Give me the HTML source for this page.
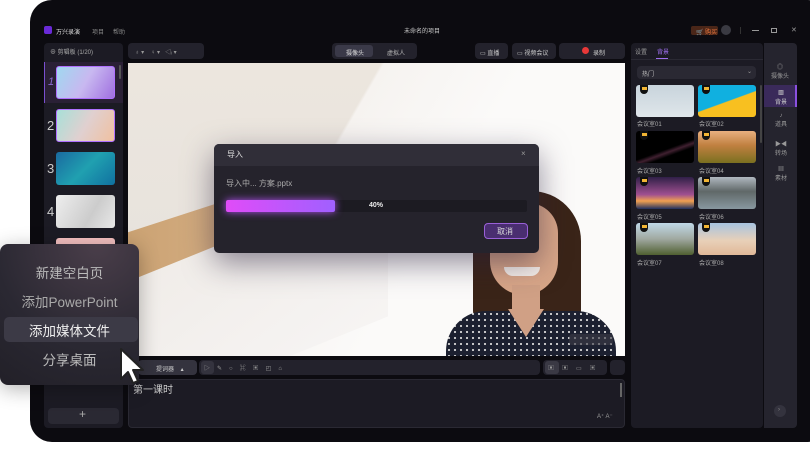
<!DOCTYPE html>
<html><head><meta charset="utf-8"><style>
*{margin:0;padding:0;box-sizing:border-box}
body{width:810px;height:456px;background:#fff;position:relative;overflow:hidden;font-family:"Liberation Sans","Noto Sans CJK SC",sans-serif;color:#bbb}
.a{position:absolute}
.win{left:30px;top:0;width:800px;height:442px;background:#0c0b10;border-radius:22px}
.panel{background:#1c1b24;border-radius:4px}
.t{font-size:6px;color:#aaa;white-space:nowrap}
.btn{background:#23222c;border-radius:4px}
.th{border-radius:3px}
.crown{width:8px;height:9px;background:#111;border-radius:0 0 4px 4px}
.crown:after{content:"";position:absolute;left:1.5px;top:2px;width:5px;height:3px;background:#f2b534}
</style></head><body>
<div class="a win"></div>
<!-- title bar -->
<div class="a" style="left:44px;top:26px;width:8px;height:8px;border-radius:2px;background:#6a2ad8"></div>
<div class="a t" style="left:56px;top:27px;color:#ddd">万兴录演</div>
<div class="a t" style="left:92px;top:27px;color:#888">项目</div>
<div class="a t" style="left:113px;top:27px;color:#888">帮助</div>
<div class="a t" style="left:404px;top:26px;color:#ccc">未命名的项目</div>
<div class="a" style="left:691px;top:26px;width:27px;height:9px;background:#4a2618;border-radius:2px"></div>
<div class="a t" style="left:696px;top:27px;color:#f07a40">🛒 购买</div>
<div class="a" style="left:721px;top:25px;width:10px;height:10px;border-radius:50%;background:#3a3a42"></div>
<div class="a" style="left:740px;top:27px;width:1px;height:7px;background:#333"></div>
<div class="a" style="left:752px;top:30px;width:7px;height:1px;background:#999"></div>
<div class="a" style="left:771px;top:28px;width:6px;height:5px;border:1px solid #999"></div>
<div class="a t" style="left:791px;top:26px;color:#999;font-size:7px">✕</div>
<!-- left panel -->
<div class="a panel" style="left:44px;top:43px;width:79px;height:385px"></div>
<div class="a t" style="left:50px;top:47px">⊕ 剪辑板 (1/20)</div>
<div class="a" style="left:44px;top:62px;width:79px;height:41px;background:#2a2035;border-left:1px solid #7a4fd0"></div>
<div class="a" style="left:119px;top:65px;width:2px;height:14px;background:#555;border-radius:1px"></div>
<div class="a th" style="left:56px;top:66px;width:59px;height:33px;border:1px solid #b070ff;background:linear-gradient(120deg,#a0d8f0,#c8b8f0 50%,#a070e0)"></div>
<div class="a th" style="left:56px;top:109px;width:59px;height:33px;border:1px solid #b070ff;background:linear-gradient(120deg,#a8e0d8,#e0d0d0 50%,#f0c0a0)"></div>
<div class="a th" style="left:56px;top:152px;width:59px;height:33px;background:linear-gradient(135deg,#1a6aa0,#20a0b0 50%,#1070a0)"></div>
<div class="a th" style="left:56px;top:195px;width:59px;height:33px;background:linear-gradient(120deg,#eee,#ccc 60%,#e8e8e8)"></div>
<div class="a th" style="left:56px;top:238px;width:59px;height:10px;background:#f4c0c0"></div>
<div class="a" style="left:48px;top:76px;font-size:11px;color:#8a6ad0;font-style:italic">1</div>
<div class="a" style="left:47px;top:118px;font-size:13px;color:#ccc">2</div>
<div class="a" style="left:47px;top:161px;font-size:13px;color:#ccc">3</div>
<div class="a" style="left:47px;top:204px;font-size:13px;color:#ccc">4</div>
<div class="a btn" style="left:48px;top:408px;width:71px;height:16px;background:#2a2933"></div>
<div class="a" style="left:79px;top:407px;font-size:12px;color:#aaa">+</div>
<!-- top toolbar -->
<div class="a btn" style="left:128px;top:43px;width:76px;height:16px"></div>
<div class="a t" style="left:135px;top:47px;color:#999">♁ ▾ &nbsp;&nbsp;&nbsp;♀ ▾ &nbsp;&nbsp;◁ᵢ ▾</div>
<div class="a btn" style="left:332px;top:43px;width:85px;height:16px"></div>
<div class="a" style="left:335px;top:45px;width:38px;height:12px;background:#3a3948;border-radius:3px"></div>
<div class="a t" style="left:346px;top:48px;color:#ddd">摄像头</div>
<div class="a t" style="left:387px;top:48px;color:#bbb">虚拟人</div>
<div class="a btn" style="left:475px;top:43px;width:33px;height:16px"></div>
<div class="a t" style="left:480px;top:48px;color:#ccc">▭ 直播</div>
<div class="a btn" style="left:512px;top:43px;width:44px;height:16px"></div>
<div class="a t" style="left:517px;top:48px;color:#ccc">▭ 视频会议</div>
<div class="a btn" style="left:559px;top:43px;width:66px;height:16px"></div>
<div class="a" style="left:582px;top:47px;width:7px;height:7px;border-radius:50%;background:#e83838"></div>
<div class="a t" style="left:593px;top:48px;color:#ccc">录制</div>
<!-- canvas -->
<div class="a" style="left:128px;top:63px;width:497px;height:293px;overflow:hidden;background:linear-gradient(180deg,#ece6de,#e8e3dd 60%,#f0eeec)">
 <div class="a" style="left:0;top:0;width:497px;height:293px;background:linear-gradient(120deg,transparent 0 38%,#f6f3f0 38.5%,#fbfaf9 60%)"></div>
 <div class="a" style="left:-20px;top:140px;width:220px;height:60px;background:linear-gradient(90deg,#c9a070,#ddb890);transform:skewY(-18deg)"></div>
 <div class="a" style="left:-20px;top:170px;width:280px;height:140px;background:linear-gradient(160deg,#f0ece8,#f6f4f3);transform:skewY(-22deg)"></div>
 <div class="a" style="left:345px;top:128px;width:108px;height:140px;background:#3a2418;border-radius:50px 50px 20px 20px"></div>
 <div class="a" style="left:362px;top:140px;width:68px;height:92px;background:#d8a688;border-radius:30px 30px 34px 34px"></div>
 <div class="a" style="left:376px;top:204px;width:36px;height:9px;background:#f5eee8;border-radius:0 0 18px 18px"></div>
 <div class="a" style="left:384px;top:222px;width:28px;height:40px;background:#d0a085"></div>
 <div class="a" style="left:318px;top:248px;width:170px;height:60px;background:radial-gradient(circle,#ddd 0.8px,#1c2030 1.3px) 0 0/6px 6px;border-radius:40px 40px 0 0"></div>
 <div class="a" style="left:380px;top:246px;width:36px;height:28px;background:#d0a085;clip-path:polygon(0 0,100% 0,50% 100%)"></div>
 <div class="a" style="left:441px;top:271px;width:44px;height:11px;background:rgba(60,60,70,.6);border-radius:3px"></div>
</div>
<!-- dialog -->
<div class="a" style="left:214px;top:144px;width:325px;height:109px;background:#25232c;border-radius:5px;box-shadow:0 10px 30px rgba(40,30,60,.5)"></div>
<div class="a" style="left:214px;top:144px;width:325px;height:22px;background:#302e38;border-radius:5px 5px 0 0"></div>
<div class="a" style="left:227px;top:149px;font-size:8px;color:#ddd">导入</div>
<div class="a" style="left:521px;top:149px;font-size:8px;color:#999">×</div>
<div class="a" style="left:226px;top:178px;font-size:8px;color:#aaa">导入中... 方案.pptx</div>
<div class="a" style="left:226px;top:200px;width:301px;height:12px;background:#1c1b22;border-radius:2px"></div>
<div class="a" style="left:226px;top:200px;width:109px;height:12px;background:linear-gradient(90deg,#e04cf8,#a060ff);border-radius:2px;box-shadow:0 0 8px #b050f0"></div>
<div class="a" style="left:369px;top:202px;font-size:7px;color:#eee;font-weight:bold">40%</div>
<div class="a" style="left:484px;top:223px;width:44px;height:16px;background:#4a2e70;border:1px solid #9a60d8;border-radius:4px"></div>
<div class="a" style="left:497px;top:226px;font-size:8px;color:#ddd">取消</div>
<!-- bottom toolbar -->
<div class="a btn" style="left:138px;top:360px;width:59px;height:15px;background:#34333e"></div>
<div class="a t" style="left:156px;top:364px;color:#ccc">提词器 &nbsp;&nbsp;&nbsp;▴</div>
<div class="a btn" style="left:199px;top:360px;width:341px;height:15px"></div>
<div class="a" style="left:201px;top:361px;width:13px;height:13px;background:#34333e;border-radius:3px"></div>
<div class="a t" style="left:204px;top:363px;color:#999;letter-spacing:7px">▷✎○⌘▣◰⌂</div>
<div class="a btn" style="left:543px;top:360px;width:64px;height:15px"></div>
<div class="a" style="left:545px;top:361px;width:14px;height:13px;background:#3a3944;border-radius:3px"></div>
<div class="a t" style="left:548px;top:363px;color:#999;letter-spacing:8px">▣▣▭▣</div>
<div class="a btn" style="left:610px;top:360px;width:15px;height:15px"></div>
<div class="a panel" style="left:128px;top:379px;width:497px;height:49px;border:1px solid #2a2933"></div>
<div class="a" style="left:133px;top:381px;font-size:10px;color:#ccc">第一课时</div>
<div class="a" style="left:620px;top:383px;width:2px;height:14px;background:#666"></div>
<div class="a t" style="left:597px;top:413px;color:#999">A⁺ A⁻</div>
<!-- right panel -->
<div class="a panel" style="left:631px;top:43px;width:132px;height:385px"></div>
<div class="a t" style="left:635px;top:47px;color:#999">设置</div>
<div class="a t" style="left:657px;top:47px;color:#a070f0">背景</div>
<div class="a" style="left:656px;top:58px;width:12px;height:1px;background:#a070f0"></div>
<div class="a" style="left:631px;top:59px;width:132px;height:1px;background:#2a2933"></div>
<div class="a btn" style="left:637px;top:66px;width:119px;height:13px;background:#2a2933"></div>
<div class="a t" style="left:642px;top:69px;color:#bbb">热门</div>
<div class="a t" style="left:747px;top:68px;color:#999">⌄</div>
<div class="a" style="left:760px;top:85px;width:2px;height:58px;background:#444;border-radius:1px"></div>

<div class="a th" style="left:636px;top:85px;width:58px;height:32px;background:linear-gradient(180deg,#c8d4dc,#dfe6ea)"></div>
<div class="a th" style="left:698px;top:85px;width:58px;height:32px;background:linear-gradient(160deg,#10b0e0 50%,#f8c020 52%)"></div>
<div class="a th" style="left:636px;top:131px;width:58px;height:32px;background:linear-gradient(160deg,#000 55%,#402030 62%,#000 70%)"></div>
<div class="a th" style="left:698px;top:131px;width:58px;height:32px;background:linear-gradient(180deg,#e8b080,#c08040 45%,#7a7020)"></div>
<div class="a th" style="left:636px;top:177px;width:58px;height:32px;background:linear-gradient(180deg,#302048,#a05090 55%,#f0a050 75%,#203060)"></div>
<div class="a th" style="left:698px;top:177px;width:58px;height:32px;background:linear-gradient(180deg,#b0b8c0,#606868 45%,#8898a0)"></div>
<div class="a th" style="left:636px;top:223px;width:58px;height:32px;background:linear-gradient(180deg,#c0d8e8,#a0a8a0 50%,#506030)"></div>
<div class="a th" style="left:698px;top:223px;width:58px;height:32px;background:linear-gradient(180deg,#a8c4e0,#e8d0b8 55%,#e0b898)"></div>
<div class="a crown" style="left:640px;top:85px"></div><div class="a crown" style="left:702px;top:85px"></div>
<div class="a crown" style="left:640px;top:131px"></div><div class="a crown" style="left:702px;top:131px"></div>
<div class="a crown" style="left:640px;top:177px"></div><div class="a crown" style="left:702px;top:177px"></div>
<div class="a crown" style="left:640px;top:223px"></div><div class="a crown" style="left:702px;top:223px"></div>
<div class="a t" style="left:637px;top:119px">会议室01</div><div class="a t" style="left:699px;top:119px">会议室02</div>
<div class="a t" style="left:637px;top:166px">会议室03</div><div class="a t" style="left:699px;top:166px">会议室04</div>
<div class="a t" style="left:637px;top:212px">会议室05</div><div class="a t" style="left:699px;top:212px">会议室06</div>
<div class="a t" style="left:637px;top:258px">会议室07</div><div class="a t" style="left:699px;top:258px">会议室08</div>
<!-- far right sidebar -->
<div class="a" style="left:764px;top:43px;width:33px;height:385px;background:#25242e;border-radius:0 4px 4px 0"></div>
<div class="a t" style="left:771px;top:62px;color:#999;text-align:center;width:18px">◎<br>摄像头</div>
<div class="a" style="left:764px;top:85px;width:33px;height:22px;background:#3a2a5a;border-right:2px solid #8a50e0"></div>
<div class="a t" style="left:773px;top:88px;color:#ccc;text-align:center;width:16px">▩<br>背景</div>
<div class="a t" style="left:773px;top:113px;color:#999;text-align:center;width:16px">♪<br>道具</div>
<div class="a t" style="left:773px;top:139px;color:#999;text-align:center;width:16px">▶◀<br>转场</div>
<div class="a t" style="left:773px;top:164px;color:#999;text-align:center;width:16px">▦<br>素材</div>
<div class="a" style="left:774px;top:405px;width:12px;height:12px;border-radius:50%;background:#34333e"></div>
<div class="a t" style="left:778px;top:407px;color:#888">›</div>
<!-- popup menu -->
<div class="a" style="left:0;top:244px;width:139px;height:141px;border-radius:8px;background:radial-gradient(circle at 70% 0,#4a3e4a,#2a2832 60%,#222028);box-shadow:0 4px 20px rgba(0,0,0,.3)"></div>
<div class="a" style="left:4px;top:317px;width:134px;height:25px;background:#3c3a46;border-radius:5px"></div>
<div class="a" style="left:0;top:262px;width:139px;text-align:center;font-size:13.5px;color:#bbb">新建空白页</div>
<div class="a" style="left:0;top:291px;width:139px;text-align:center;font-size:13.5px;color:#aaa">添加PowerPoint</div>
<div class="a" style="left:0;top:320px;width:139px;text-align:center;font-size:13.5px;color:#eee">添加媒体文件</div>
<div class="a" style="left:0;top:349px;width:139px;text-align:center;font-size:13.5px;color:#bbb">分享桌面</div>
<svg class="a" style="left:118px;top:347px" width="30" height="40" viewBox="0 0 30 40"><path d="M3 2 L3 32 L10 25 L15 36 L20 34 L15 23 L25 23 Z" fill="#fff" stroke="#222" stroke-width="2" stroke-linejoin="round"/></svg>
</body></html>
